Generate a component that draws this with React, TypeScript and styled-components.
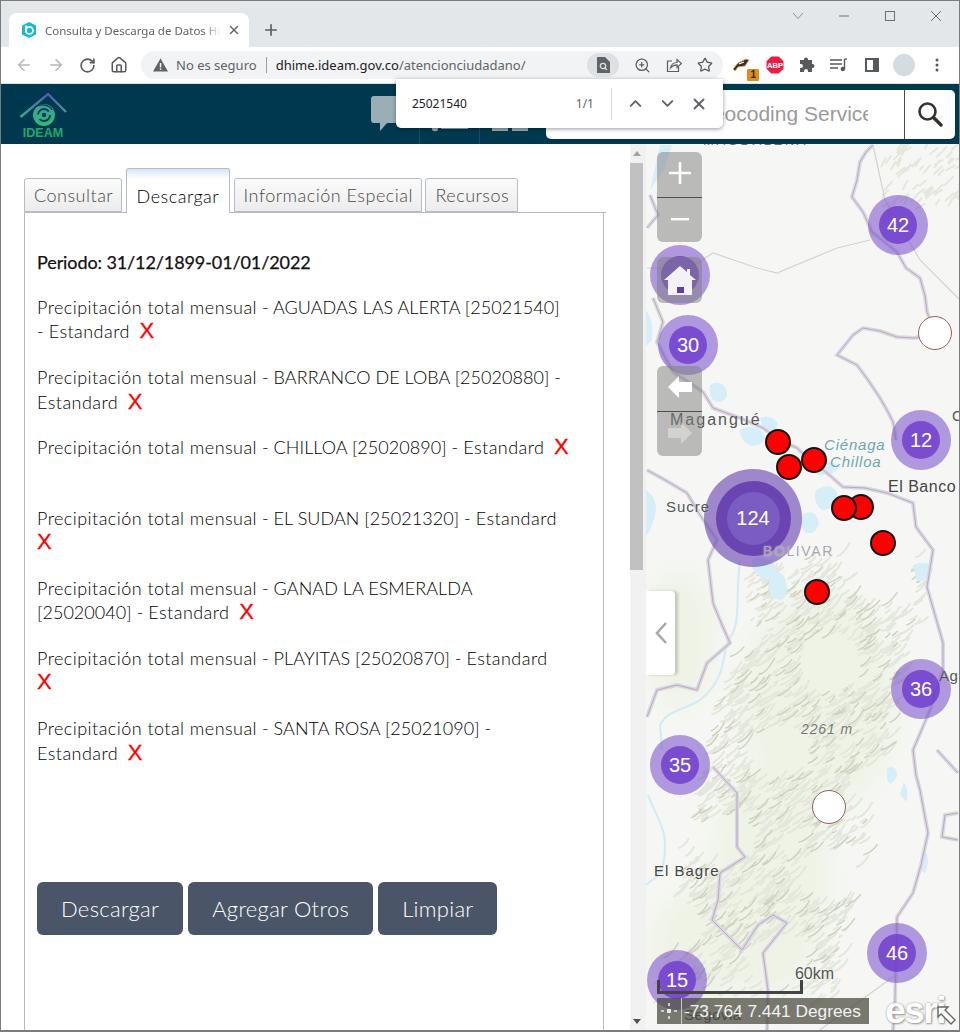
import React from "react";
import styled, { createGlobalStyle } from "styled-components";
import { ArrowLeft, ArrowRight, ChevronDown, ChevronUp, House, Plus, RotateCw, Star, X, ZoomIn } from "lucide-react";

const GlobalStyle = createGlobalStyle`
  html, body { margin: 0; padding: 0; background: #fff; }
  * { box-sizing: border-box; }
`;

const UI_FONT = `"Noto Sans", "Open Sans", sans-serif`;
const PAGE_FONT = `Lato, "Noto Sans", sans-serif`;
const MAP_FONT = `"Liberation Sans", Arial, sans-serif`;

const stations = [
  "AGUADAS LAS ALERTA [25021540] -\u00a0",
  "BARRANCO DE LOBA [25020880] - ",
  "CHILLOA [25020890] - ",
  "EL SUDAN [25021320] - ",
  "GANAD LA ESMERALDA [25020040] - ",
  "PLAYITAS [25020870] - ",
  "SANTA ROSA [25021090] - ",
];

const clusters = [
  { x: 680, y: 275, label: "" },
  { x: 898, y: 225, label: "42" },
  { x: 688, y: 345, label: "30" },
  { x: 921, y: 440, label: "12" },
  { x: 921, y: 689, label: "36" },
  { x: 680, y: 765, label: "35" },
  { x: 897, y: 953, label: "46" },
  { x: 677, y: 980, label: "15" },
];

const redPins = [
  [778, 442],
  [814, 460],
  [789, 467],
  [861, 507],
  [844, 508],
  [883, 543],
  [817, 592],
];

const labels = [
  { x: 703, y: 133, text: "MAGDALENA", tone: "#6b6b6b", size: 13, spacing: 2.6 },
  { x: 670, y: 412, text: "Magangué", tone: "#555", size: 16, spacing: 2 },
  { x: 824, y: 437, text: "Ciénaga", tone: "#6fa6ad", size: 15, spacing: 0.8, italic: true },
  { x: 830, y: 454, text: "Chilloa", tone: "#6fa6ad", size: 15, spacing: 0.8, italic: true },
  { x: 666, y: 499, text: "Sucre", tone: "#555", size: 15, spacing: 1 },
  { x: 888, y: 479, text: "El Banco", tone: "#444", size: 16, spacing: 0.5 },
  { x: 763, y: 543, text: "BOLIVAR", tone: "#a9a7ad", size: 14, spacing: 1.6 },
  { x: 801, y: 721, text: "2261 m", tone: "#777", size: 14, spacing: 0.9, italic: true },
  { x: 939, y: 668, text: "Ag", tone: "#555", size: 15, spacing: 0.5 },
  { x: 952, y: 408, text: "C", tone: "#555", size: 15, spacing: 0 },
  { x: 654, y: 863, text: "El Bagre", tone: "#444", size: 15, spacing: 1 },
  { x: 684, y: 1007, text: "Segovia", tone: "#555", size: 15, spacing: 0.5 },
];

const borders = [
  "M873 145 L866 152 L860 162 L857 180 L852 197 L863 212 L872 232 L897 252 L906 268 L920 278 L925 296 L927 312 L935 333",
  "M933 333 L915 338 L897 337 L880 331 L863 328 L853 335 L845 345 L837 355 L857 365 L868 380 L880 398 L888 412 L893 422 L896 440",
  "M650 195 L658 215 L647 228",
  "M653 298 L663 322 L657 342 L673 372 L690 383 L703 392 L713 408 L740 418 L763 428 L780 440 L797 448 L812 462 L827 473 L843 487 L865 488 L887 493 L913 503 L916 527 L933 550 L927 587 L935 615 L943 643 L943 670 L930 710 L913 750 L916 775 L920 790 L928 833 L921 865 L913 893 L897 917 L896 960 L895 1000 L893 1032",
  "M647 470 L665 480 L687 493 L700 515 L717 540 L708 560 L713 603 L722 625 L730 643 L707 663 L697 690 L677 685 L657 690 L647 717",
  "M713 767 L725 780 L737 793 L737 847 L745 857 L720 873 L718 900 L712 920 L727 935 L742 950 L758 925 L773 915 L787 923 L763 953 L768 990 L767 1032",
  "M937 750 L958 773 M958 813 L945 815 L942 837 L958 840",
];

const thinLines = [
  "M647 268 L690 268 L713 253 L757 268 L777 273 L837 248 L870 240",
  "M873 145 L885 200 L920 260 L960 300",
  "M893 977 L817 1032",
];

const lakes = [
  "M710 385 q10 -6 16 4 q4 10 -6 13 q-12 0 -10 -17z",
  "M760 418 q12 -4 18 6 q-2 10 -14 8z",
  "M740 430 q14 -8 24 4 q4 10 -12 12 q-12 -4 -12 -16z",
  "M816 490 q18 -10 22 6 q-4 14 -16 14 q-10 -8 -6 -20z",
  "M803 514 q14 -6 16 10 q-4 12 -14 8 q-8 -8 -2 -18z",
  "M752 560 q16 -6 24 6 q-4 14 -14 12 q-12 -6 -10 -18z",
  "M772 572 q10 -4 14 10 q4 14 -6 18 q-12 -2 -12 -14z",
  "M812 465 q18 -8 28 2 q-8 10 -22 8z",
  "M660 145 L672 145 L664 170 L650 190z",
  "M646 310 q8 10 6 30 l-6 6z",
  "M646 490 q10 6 10 20 q-4 20 -10 26z",
  "M913 565 q16 -6 20 4 q-4 12 -16 12z",
  "M887 768 q10 -4 10 8 q-6 12 -10 4z",
  "M904 782 q6 10 2 20 l-6 -8z",
  "M925 850 q6 10 0 24 l-6 -6z",
];

const rivers = [
  "M740 560 C735 600 742 625 728 640 C722 660 725 680 700 700 C680 712 668 710 660 725 L662 750",
  "M648 795 C660 825 668 830 664 860 C660 880 650 880 646 885",
];

// Seeded noise for the hillshade strokes, so every run draws the same relief.
const makeRelief = () => {
  let seed = 20211;
  const next = () => {
    seed = (seed * 16807) % 2147483647;
    return seed / 2147483647;
  };
  const strong: string[] = [];
  const soft: string[] = [];
  for (let i = 0; i < 1800; i++) {
    const t = next();
    const cx = 835 - t * 95 + (next() - 0.5) * 180;
    const cy = 570 + t * 420 + (next() - 0.5) * 40;
    const len = 4 + next() * 12;
    // keep the ridges in patches, with pale valleys between them
    if (Math.sin(cx * 0.05 + cy * 0.03) + Math.sin(cy * 0.06 - cx * 0.02) < -0.7) continue;
    const line = `M${cx.toFixed(1)} ${cy.toFixed(1)} q${(len * 0.5).toFixed(1)} ${(-len * 0.1).toFixed(1)} ${len.toFixed(1)} ${(-len * (0.5 + next() * 0.6)).toFixed(1)}`;
    if (i % 5 === 0) strong.push(line);
    else soft.push(line);
  }
  for (let i = 0; i < 70; i++) {
    const cx = 880 + next() * 80;
    const cy = 145 + next() * 65;
    soft.push(`M${cx.toFixed(1)} ${cy.toFixed(1)} l${(4 + next() * 6).toFixed(1)} ${(-4 - next() * 6).toFixed(1)}`);
  }
  return { strong: strong.join(" "), soft: soft.join(" ") };
};

const relief = makeRelief();

const App = () => (
  <>
    <GlobalStyle />
    <Window>
      <TabStrip>
        <BrowserTab>
          <svg width="16" height="16" viewBox="0 0 16 16">
            <polygon points="8,0 15,3.5 15,12.5 8,16 1,12.5 1,3.5" fill="#1fb5d6" />
            <circle cx="8.4" cy="8.4" r="3.6" fill="none" stroke="#fff" strokeWidth="1.7" />
            <path d="M5 3.5 V10" stroke="#fff" strokeWidth="1.7" />
          </svg>
          <TabTitle>Consulta y Descarga de Datos Hidrología</TabTitle>
          <X size={14} color="#5f6368" strokeWidth={2.4} />
        </BrowserTab>
        <NewTab>
          <Plus size={18} color="#5a5e63" strokeWidth={2.2} />
        </NewTab>
        <WindowButtons>
          <svg width="12" height="8" viewBox="0 0 12 8">
            <path d="M1 1 L6 6.5 L11 1" fill="none" stroke="#8b8f94" strokeWidth="1" />
          </svg>
          <svg width="12" height="12" viewBox="0 0 12 12">
            <path d="M1 6 H11" stroke="#6b6e72" strokeWidth="1" />
          </svg>
          <svg width="12" height="12" viewBox="0 0 12 12">
            <rect x="1.5" y="1.5" width="9" height="9" fill="none" stroke="#6b6e72" strokeWidth="1" />
          </svg>
          <svg width="12" height="12" viewBox="0 0 12 12">
            <path d="M1 1 L11 11 M11 1 L1 11" stroke="#6b6e72" strokeWidth="1" />
          </svg>
        </WindowButtons>
      </TabStrip>

      <Toolbar>
        <NavButtons>
          <ArrowLeft size={18} color="#b4b7bb" strokeWidth={2} />
          <ArrowRight size={18} color="#b4b7bb" strokeWidth={2} />
          <RotateCw size={17} color="#56595e" strokeWidth={2.3} />
          <House size={18} color="#56595e" strokeWidth={2} />
        </NavButtons>
        <Omnibox>
          <svg width="15" height="14" viewBox="0 0 15 14">
            <path d="M7.5 0.5 L15 13.5 H0 Z" fill="#5f6368" />
            <rect x="6.8" y="5" width="1.5" height="4.5" fill="#f1f3f4" />
            <rect x="6.8" y="10.4" width="1.5" height="1.5" fill="#f1f3f4" />
          </svg>
          <Insecure>No es seguro</Insecure>
          <UrlDivider />
          <Url>
            dhime.ideam.gov.co<span>/atencionciudadano/</span>
          </Url>
          <OmniActions>
            <FindChip>
              <svg width="14" height="16" viewBox="0 0 14 16">
                <path d="M1 0 H9 L14 5 V16 H1 Z" fill="#5f6368" />
                <circle cx="7" cy="9" r="2.7" fill="none" stroke="#dee1e3" strokeWidth="1.3" />
                <path d="M9 11 L11 13" stroke="#dee1e3" strokeWidth="1.3" />
              </svg>
            </FindChip>
            <ZoomIn size={17} color="#5a5e63" strokeWidth={1.8} />
            <svg width="16" height="16" viewBox="0 0 16 16">
              <path d="M6 4 H1.5 V14.5 H12.5 V10" fill="none" stroke="#5a5e63" strokeWidth="1.2" />
              <path d="M4.5 11 C5 7.5 8 5.5 11 5.5 V2.5 L15.5 6.5 L11 10.5 V7.8 C8.5 7.8 6.5 8.5 4.5 11Z" fill="none" stroke="#5a5e63" strokeWidth="1.2" />
            </svg>
            <Star size={16} color="#5a5e63" strokeWidth={2} />
          </OmniActions>
        </Omnibox>
        <Extensions>
          <ExtensionBadge>
            <svg width="18" height="14" viewBox="0 0 18 14">
              <path d="M1 11 L6 5 L14 1 L17 2 L13 8 L6 9 L3 13 Z" fill="#2d2d2d" stroke="#e5a35a" strokeWidth="1" />
              <path d="M7 6 L12 4" stroke="#fff" strokeWidth="1.2" />
            </svg>
            <Badge>1</Badge>
          </ExtensionBadge>
          <svg width="18" height="18" viewBox="0 0 18 18">
            <polygon points="5.3,0.5 12.7,0.5 17.5,5.3 17.5,12.7 12.7,17.5 5.3,17.5 0.5,12.7 0.5,5.3" fill="#ed1c45" />
            <text x="9" y="11.8" textAnchor="middle" fontFamily={MAP_FONT} fontSize="7.6" fontWeight="700" fill="#fff">
              ABP
            </text>
          </svg>
          <svg width="16" height="16" viewBox="0 0 16 16">
            <path d="M5 2.5 a2 2 0 0 1 4 0 V3 H13 V7 h0.5 a2 2 0 0 1 0 4 H13 V15 H9 v-1 a2 2 0 0 0 -4 0 v1 H1 V11 h1 a2 2 0 0 0 0 -4 H1 V3 H5 Z" fill="#56595e" />
          </svg>
          <svg width="18" height="14" viewBox="0 0 18 14">
            <path d="M0 2 H12 M0 6 H12 M0 10 H8" stroke="#56595e" strokeWidth="1.4" />
            <path d="M14.5 1 V11" stroke="#56595e" strokeWidth="1.4" />
            <path d="M14.5 1 H17" stroke="#56595e" strokeWidth="1.4" />
            <circle cx="12.8" cy="11" r="2.2" fill="#56595e" />
          </svg>
          <svg width="14" height="14" viewBox="0 0 14 14">
            <rect x="1" y="1" width="12" height="12" fill="none" stroke="#56595e" strokeWidth="2" />
            <rect x="8" y="1" width="5" height="12" fill="#56595e" />
          </svg>
          <Avatar />
          <svg width="4" height="14" viewBox="0 0 4 14">
            <circle cx="2" cy="2" r="1.5" fill="#56595e" />
            <circle cx="2" cy="7" r="1.5" fill="#56595e" />
            <circle cx="2" cy="12" r="1.5" fill="#56595e" />
          </svg>
        </Extensions>
      </Toolbar>

      <AppHeader>
        <Logo>
          <svg width="48" height="34" viewBox="0 0 48 34">
            <defs>
              <linearGradient id="roof" x1="0" y1="0" x2="0" y2="1">
                <stop offset="0" stopColor="#5a55b0" />
                <stop offset="1" stopColor="#2fb184" />
              </linearGradient>
              <linearGradient id="eye" x1="0" y1="0" x2="0" y2="1">
                <stop offset="0" stopColor="#3f9d9c" />
                <stop offset="1" stopColor="#2dbb75" />
              </linearGradient>
            </defs>
            <path d="M1.5 24 L29 1 L47 19" fill="none" stroke="url(#roof)" strokeWidth="2.4" />
            <circle cx="25" cy="22" r="11" fill="url(#eye)" />
            <path d="M16 14 C22 10 31 12 33 17" fill="none" stroke="#00394f" strokeWidth="1.4" />
            <circle cx="25" cy="22" r="6" fill="none" stroke="#00394f" strokeWidth="1.8" strokeDasharray="14 5" />
            <circle cx="25" cy="22" r="2.2" fill="#00394f" />
          </svg>
          <LogoText>IDEAM</LogoText>
        </Logo>
        <HeaderIcons>
          <svg width="34" height="36" viewBox="0 0 34 36">
            <path d="M3 0 H34 V27 H16 L9 35 V27 H3 A3 3 0 0 1 0 24 V3 A3 3 0 0 1 3 0 Z" fill="#9aaeb6" />
          </svg>
          <HeaderCell>
            <svg width="38" height="36" viewBox="0 0 38 36">
              <circle cx="5" cy="32" r="3.2" fill="#9aaeb6" />
              <rect x="11" y="27" width="27" height="6" fill="#9aaeb6" />
            </svg>
          </HeaderCell>
          <HeaderCell>
            <svg width="36" height="36" viewBox="0 0 36 36">
              <rect x="0" y="29" width="16" height="6" fill="#9aaeb6" />
              <rect x="20" y="29" width="16" height="6" fill="#9aaeb6" />
            </svg>
          </HeaderCell>
        </HeaderIcons>
        <Geocoder>
          <GeocoderInput>
            <GeocoderText>Find address or place with Geocoding Service</GeocoderText>
          </GeocoderInput>
          <GeocoderButton>
            <svg width="26" height="26" viewBox="0 0 26 26">
              <circle cx="10.5" cy="10.5" r="8" fill="none" stroke="#33342f" strokeWidth="2.6" />
              <path d="M16.5 16.5 L24 24" stroke="#33342f" strokeWidth="3.4" strokeLinecap="round" />
            </svg>
          </GeocoderButton>
        </Geocoder>
      </AppHeader>

      <FindBar>
        <FindQuery>25021540</FindQuery>
        <FindCount>1/1</FindCount>
        <FindDivider />
        <FindButtons>
          <ChevronUp size={19} color="#5f6368" strokeWidth={2.4} />
          <ChevronDown size={19} color="#5f6368" strokeWidth={2.4} />
          <X size={18} color="#5f6368" strokeWidth={2.6} />
        </FindButtons>
      </FindBar>

      <Body>
        <Panel>
          <PanelTabs>
            <PanelTab>Consultar</PanelTab>
            <PanelTab $active>Descargar</PanelTab>
            <PanelTab>Información Especial</PanelTab>
            <PanelTab>Recursos</PanelTab>
          </PanelTabs>
          <TabContent>
            <Period>Periodo: 31/12/1899-01/01/2022</Period>
            <StationList>
              {stations.map((station) => (
                <Station key={station}>
                  <Wide>Precipitación total mensual</Wide> - {station}
                  <Wide>Estandard</Wide>
                  <RemoveMark> X</RemoveMark>
                </Station>
              ))}
            </StationList>
            <Actions>
              <ActionButton>Descargar</ActionButton>
              <ActionButton>Agregar Otros</ActionButton>
              <ActionButton>Limpiar</ActionButton>
            </Actions>
          </TabContent>
        </Panel>

        <Scrollbar>
          <ScrollArrow $up />
          <ScrollThumb />
          <ScrollArrow />
        </Scrollbar>

        <MapArea>
          <MapCanvas viewBox="646 144 314 888" preserveAspectRatio="none">
            <defs>
              <filter id="soft" x="-5%" y="-5%" width="110%" height="110%">
                <feGaussianBlur stdDeviation="0.7" />
              </filter>
              <filter id="softer" x="-10%" y="-10%" width="120%" height="120%">
                <feGaussianBlur stdDeviation="12" />
              </filter>
            </defs>
            <rect x="646" y="144" width="314" height="888" fill="#f6f7f4" />
            <g filter="url(#softer)" fill="#eef3e6">
              <ellipse cx="770" cy="880" rx="60" ry="120" />
              <ellipse cx="820" cy="700" rx="80" ry="110" />
              <ellipse cx="680" cy="640" rx="35" ry="70" />
              <ellipse cx="700" cy="950" rx="50" ry="60" />
            </g>
            <g filter="url(#soft)">
              <path d={relief.soft} fill="none" stroke="#e4e7db" strokeWidth="2" />
              <path d={relief.strong} fill="none" stroke="#cdd1bd" strokeWidth="1.4" />
              <g fill="#d6eef8">
                {lakes.map((d) => (
                  <path key={d} d={d} />
                ))}
              </g>
              <g fill="none" stroke="#d2ecf6" strokeWidth="2.2">
                {rivers.map((d) => (
                  <path key={d} d={d} />
                ))}
              </g>
              <g fill="none" stroke="#d5d2d4" strokeWidth="1.2">
                {thinLines.map((d) => (
                  <path key={d} d={d} />
                ))}
              </g>
              <g fill="none" stroke="#ddd6e3" strokeWidth="4">
                {borders.map((d) => (
                  <path key={d} d={d} />
                ))}
              </g>
              <g fill="none" stroke="#9a94a2" strokeOpacity="0.7" strokeWidth="0.9">
                {borders.map((d) => (
                  <path key={d} d={d} />
                ))}
              </g>
            </g>
          </MapCanvas>

          {clusters.map((cluster) => (
            <Cluster key={`${cluster.x}-${cluster.y}`} $x={cluster.x} $y={cluster.y}>
              <ClusterCore>{cluster.label}</ClusterCore>
            </Cluster>
          ))}
          <BigCluster>
            <BigClusterMid>
              <BigClusterCore>124</BigClusterCore>
            </BigClusterMid>
          </BigCluster>

          {labels.map((label) => (
            <MapLabel
              key={label.text}
              $x={label.x}
              $y={label.y}
              $tone={label.tone}
              $size={label.size}
              $spacing={label.spacing}
              $italic={label.italic}
            >
              {label.text}
            </MapLabel>
          ))}

          {redPins.map(([x, y]) => (
            <RedPin key={`${x}-${y}`} $x={x} $y={y} />
          ))}
          <WhitePin $x={935} $y={333} />
          <WhitePin $x={829} $y={807} />

          <ZoomControl>
            <ControlCell>
              <svg width="24" height="24" viewBox="0 0 24 24">
                <path d="M12 1 V23 M1 12 H23" stroke="#fff" strokeWidth="2.6" />
              </svg>
            </ControlCell>
            <ControlCell $divided>
              <svg width="18" height="4" viewBox="0 0 18 4">
                <rect width="18" height="2.4" y="1" fill="#fff" />
              </svg>
            </ControlCell>
          </ZoomControl>
          <HomeControl>
            <svg width="32" height="30" viewBox="0 0 32 30">
              <path d="M16 1 L23 7 V4 H26 V10 L32 15 L28 15 V30 H4 V15 H0 Z" fill="#f4f2f6" />
              <rect x="13" y="22" width="7" height="6" fill="#5c3ea5" />
            </svg>
          </HomeControl>
          <ExtentControl>
            <ControlCell>
              <svg width="24" height="22" viewBox="0 0 24 22">
                <path d="M0 11 L11 0 V6 H24 V16 H11 V22 Z" fill="#fff" />
              </svg>
            </ControlCell>
            <ControlCell $divided $dim>
              <svg width="24" height="22" viewBox="0 0 24 22">
                <path d="M24 11 L13 0 V6 H0 V16 H13 V22 Z" fill="#fff" />
              </svg>
            </ControlCell>
          </ExtentControl>

          <CollapseTab>
            <svg width="14" height="24" viewBox="0 0 14 24">
              <path d="M12 2 L3 12 L12 22" fill="none" stroke="#a8a8a8" strokeWidth="2.6" />
            </svg>
          </CollapseTab>

          <ScaleBar>
            <ScaleText>60km</ScaleText>
          </ScaleBar>
          <CoordBar>
            <CoordIcon>
              <svg width="16" height="16" viewBox="0 0 16 16">
                <path d="M8 0 V3 M8 13 V16 M0 8 H3 M13 8 H16" stroke="#e8e8e8" strokeWidth="1.6" />
                <rect x="6" y="6" width="4" height="4" fill="#e8e8e8" />
              </svg>
            </CoordIcon>
            <CoordText>-73.764 7.441 Degrees</CoordText>
          </CoordBar>
          <EsriMark>esri</EsriMark>
          <ResizeIcon width="20" height="20" viewBox="0 0 20 20">
            <path d="M1 1 H11 L8 4 L18 14 L14 18 L4 8 L1 11 Z" fill="#fff" stroke="#666" strokeWidth="1.4" />
          </ResizeIcon>
        </MapArea>
      </Body>
    </Window>
  </>
);

export default App;

const Window = styled.div`
  position: relative;
  display: flex;
  flex-direction: column;
  width: 960px;
  height: 1032px;
  overflow: hidden;
  border: 1px solid #7c7c7c;
  border-bottom-width: 2px;
  font-family: ${UI_FONT};
`;

const TabStrip = styled.div`
  display: flex;
  align-items: flex-end;
  flex: 0 0 46px;
  padding-left: 8px;
  background: #e4e7ea;
`;

const BrowserTab = styled.div`
  display: flex;
  align-items: center;
  width: 240px;
  height: 34px;
  padding: 0 8px 0 12px;
  background: #fff;
  border-radius: 8px 8px 0 0;
`;

const TabTitle = styled.span`
  flex: 1;
  margin-left: 8px;
  margin-right: 6px;
  overflow: hidden;
  white-space: nowrap;
  font-size: 11.5px;
  color: #5f6368;
  -webkit-mask-image: linear-gradient(90deg, #000 90%, transparent);
  mask-image: linear-gradient(90deg, #000 90%, transparent);
`;

const NewTab = styled.div`
  display: flex;
  align-items: center;
  height: 34px;
  margin-left: 13px;
`;

const WindowButtons = styled.div`
  display: flex;
  align-items: center;
  gap: 34px;
  margin-left: auto;
  height: 100%;
  padding: 0 17px 16px 0;
`;

const Toolbar = styled.div`
  display: flex;
  align-items: center;
  flex: 0 0 37px;
  padding-left: 14px;
  background: #fff;
  border-bottom: 1px solid #dfe1e5;
`;

const NavButtons = styled.div`
  display: flex;
  align-items: center;
  gap: 14px;
  width: 126px;
`;

const Omnibox = styled.div`
  display: flex;
  align-items: center;
  width: 582px;
  height: 28px;
  padding: 0 10px 0 12px;
  background: #f1f3f4;
  border-radius: 14px;
  font-size: 13px;
`;

const Insecure = styled.span`
  margin-left: 8px;
  color: #5f6368;
`;

const UrlDivider = styled.span`
  width: 1px;
  height: 16px;
  margin: 0 9px;
  background: #9aa0a6;
`;

const Url = styled.span`
  color: #202124;

  span {
    color: #5f6368;
  }
`;

const OmniActions = styled.div`
  display: flex;
  align-items: center;
  gap: 15px;
  margin-left: auto;
`;

const FindChip = styled.div`
  display: flex;
  align-items: center;
  justify-content: center;
  width: 32px;
  height: 24px;
  background: #dee1e3;
  border-radius: 12px;
`;

const Extensions = styled.div`
  display: grid;
  grid-template-columns: repeat(7, 32.4px);
  align-items: center;
  justify-items: center;
  padding-left: 3px;
`;

const ExtensionBadge = styled.div`
  position: relative;
  display: flex;
  width: 20px;
`;

const Badge = styled.span`
  position: absolute;
  right: -7px;
  bottom: -9px;
  width: 12px;
  height: 12px;
  background: #e58a20;
  border-radius: 1px;
  text-align: center;
  font: 700 10px/12px ${MAP_FONT};
  color: #1b2b12;
`;

const Avatar = styled.div`
  width: 22px;
  height: 22px;
  background: #d3dce0;
  border-radius: 50%;
`;

const AppHeader = styled.header`
  display: flex;
  align-items: center;
  flex: 0 0 60px;
  padding-left: 18px;
  padding-right: 4px;
  background: #00394f;
`;

const Logo = styled.div`
  display: flex;
  flex-direction: column;
  align-items: center;
  width: 48px;
  margin-top: 4px;
`;

const LogoText = styled.span`
  margin-top: -1px;
  font: 700 12.5px/14px ${MAP_FONT};
  color: #22a86a;
`;

const HeaderIcons = styled.div`
  display: flex;
  align-items: stretch;
  height: 60px;
  margin-left: 304px;
  padding-top: 12px;
`;

const HeaderCell = styled.div`
  display: flex;
  align-items: flex-start;
  justify-content: flex-end;
  width: 60px;
  margin-top: -12px;
  padding: 12px 11px 0 0;
  border-left: 1px solid #1c4d60;

  &:first-of-type {
    margin-left: 14px;
  }
`;

const Geocoder = styled.div`
  display: flex;
  width: 409px;
  height: 49px;
  margin-left: auto;
  background: #fff;
  border-radius: 5px;
  overflow: hidden;
`;

const GeocoderInput = styled.div`
  width: 359px;
  padding-right: 36px;
  border-right: 1px solid #4a4a4a;
`;

const GeocoderText = styled.div`
  overflow: hidden;
  white-space: nowrap;
  direction: rtl;
  text-indent: -6px;
  font: 21px/47px ${MAP_FONT};
  color: #9a9a9a;
`;

const GeocoderButton = styled.div`
  display: flex;
  align-items: center;
  justify-content: center;
  flex: 1;
`;

const FindBar = styled.div`
  position: absolute;
  top: 78px;
  left: 395px;
  display: flex;
  align-items: center;
  width: 327px;
  height: 49px;
  padding-left: 16px;
  background: #fff;
  border-radius: 0 0 5px 5px;
  box-shadow: 0 1px 4px rgba(0, 0, 0, 0.4);
`;

const FindQuery = styled.span`
  flex: 1;
  font-size: 12px;
  color: #202124;
`;

const FindCount = styled.span`
  font-size: 12px;
  color: #5f6368;
`;

const FindDivider = styled.span`
  width: 1px;
  height: 32px;
  margin: 0 14px 0 17px;
  background: #dadce0;
`;

const FindButtons = styled.div`
  display: flex;
  align-items: center;
  gap: 13px;
  padding-right: 15px;
`;

const Body = styled.main`
  display: flex;
  flex: 1;
  min-height: 0;
`;

const Panel = styled.section`
  display: flex;
  flex-direction: column;
  flex: 0 0 629px;
  padding: 24px 26px 0 23px;
  background: #fff;
  font-family: ${PAGE_FONT};
`;

const PanelTabs = styled.div`
  display: flex;
  align-items: flex-end;
  gap: 3.4px;
  height: 45px;
  margin-right: -2px;
  border-bottom: 1px solid #b5bcc7;
`;

const PanelTab = styled.div<{ $active?: boolean }>`
  height: ${(p) => (p.$active ? "45px" : "34px")};
  margin-bottom: ${(p) => (p.$active ? "-1px" : "0")};
  padding: ${(p) => (p.$active ? "15px 10px 0 10px" : "4px 8px 0 9px")};
  border: 1px solid #b5bcc7;
  border-bottom: ${(p) => (p.$active ? "none" : "1px solid #b5bcc7")};
  border-radius: 3px 3px 0 0;
  background: ${(p) =>
    p.$active
      ? "linear-gradient(180deg, #d6e6f7 0, #fff 10px)"
      : "linear-gradient(180deg, #fbfbfb 0, #ececec 100%)"};
  font-size: 18px;
  font-weight: 300;
  letter-spacing: 0.5px;
  line-height: 24px;
  color: ${(p) => (p.$active ? "#000" : "#4a4a4a")};
`;

const TabContent = styled.div`
  flex: 1;
  padding: 37px 12px 0 12px;
  border: 1px solid #b5bcc7;
  border-top: none;
  border-bottom: none;
`;

const Period = styled.p`
  margin: 0 0 21px;
  font-size: 18px;
  line-height: 24px;
  letter-spacing: -0.1px;
  -webkit-text-stroke: 0.25px #111;
  color: #111;
`;

const StationList = styled.div`
  display: flex;
  flex-direction: column;
  width: 534px;
`;

const Station = styled.p`
  min-height: 49px;
  margin: 0 0 21.2px;
  font-size: 18px;
  font-weight: 300;
  letter-spacing: 0.05px;
  line-height: 24.4px;
  color: #000;
`;

const Wide = styled.span`
  letter-spacing: 0.45px;
`;

const RemoveMark = styled.span`
  font: 22px/20px ${MAP_FONT};
  word-spacing: 3.5px;
  -webkit-text-stroke: 0.3px #f00;
  color: #f00;
`;

const Actions = styled.div`
  display: flex;
  gap: 5px;
  margin-top: 96px;
`;

const ActionButton = styled.div`
  height: 53px;
  padding: 0 24px;
  background: #4a5568;
  border-radius: 6px;
  font-size: 22px;
  font-weight: 300;
  letter-spacing: 0.3px;
  line-height: 53px;
  color: #fff;
`;

const Scrollbar = styled.div`
  display: flex;
  flex-direction: column;
  flex: 0 0 16px;
  background: #f1f1f1;
`;

const ScrollArrow = styled.div<{ $up?: boolean }>`
  flex: 0 0 19px;
  position: relative;

  &::after {
    content: "";
    position: absolute;
    left: 3px;
    top: ${(p) => (p.$up ? "7px" : "8px")};
    border-left: 4px solid transparent;
    border-right: 4px solid transparent;
    border-${(p) => (p.$up ? "bottom" : "top")}: 5px solid ${(p) => (p.$up ? "#a3a3a3" : "#505050")};
  }
`;

const ScrollThumb = styled.div`
  flex: 0 0 407px;
  width: 13px;
  margin-bottom: auto;
  background: #c1c1c1;
`;

const MapArea = styled.div`
  position: relative;
  flex: 1;
  overflow: hidden;
`;

const MapCanvas = styled.svg`
  display: block;
  width: 314px;
  height: 888px;
`;

// Map items take page coordinates; the map itself starts at 646,144 on the page.
const onMap = (x: number, y: number, r: number) => `
  left: ${x - 646 - r}px;
  top: ${y - 144 - r}px;
  width: ${r * 2}px;
  height: ${r * 2}px;
`;

const MapLabel = styled.span<{ $x: number; $y: number; $tone: string; $size: number; $spacing: number; $italic?: boolean }>`
  position: absolute;
  left: ${(p) => p.$x - 646}px;
  top: ${(p) => p.$y - 144}px;
  font: ${(p) => (p.$italic ? "italic " : "")}${(p) => p.$size}px/16px ${MAP_FONT};
  letter-spacing: ${(p) => p.$spacing}px;
  color: ${(p) => p.$tone};
  white-space: nowrap;
  text-shadow: 0 0 2px rgba(255, 255, 255, 0.6);
`;

const Cluster = styled.div<{ $x: number; $y: number }>`
  position: absolute;
  ${(p) => onMap(p.$x, p.$y, 30)}
  display: flex;
  align-items: center;
  justify-content: center;
  background: rgba(124, 82, 205, 0.58);
  border-radius: 50%;
`;

const ClusterCore = styled.div`
  width: 38px;
  height: 38px;
  background: rgba(110, 60, 205, 0.82);
  border-radius: 50%;
  text-align: center;
  font: 20px/38px ${MAP_FONT};
  color: #fff;
`;

const BigCluster = styled.div`
  position: absolute;
  ${onMap(753, 518, 49)}
  display: flex;
  align-items: center;
  justify-content: center;
  background: rgba(112, 78, 180, 0.66);
  border-radius: 50%;
`;

const BigClusterMid = styled.div`
  display: flex;
  align-items: center;
  justify-content: center;
  width: 75px;
  height: 75px;
  background: #6a45b2;
  border-radius: 50%;
`;

const BigClusterCore = styled.div`
  width: 53px;
  height: 53px;
  background: #7a5cc2;
  border-radius: 50%;
  text-align: center;
  font: 20px/53px ${MAP_FONT};
  color: #fff;
`;

const RedPin = styled.div<{ $x: number; $y: number }>`
  position: absolute;
  ${(p) => onMap(p.$x, p.$y, 13)}
  background: #f00;
  border: 2px solid #111;
  border-radius: 50%;
`;

const WhitePin = styled.div<{ $x: number; $y: number }>`
  position: absolute;
  ${(p) => onMap(p.$x, p.$y, 17)}
  background: #fff;
  border: 1.5px solid #9c5c5c;
  border-radius: 50%;
`;

const ControlStack = styled.div`
  position: absolute;
  left: 11px;
  display: flex;
  flex-direction: column;
  width: 45px;
  background: rgba(125, 125, 125, 0.5);
  border-radius: 6px;
`;

const ZoomControl = styled(ControlStack)`
  top: 8px;
`;

const ExtentControl = styled(ControlStack)`
  top: 222px;
`;

const ControlCell = styled.div<{ $divided?: boolean; $dim?: boolean }>`
  display: flex;
  align-items: center;
  justify-content: center;
  height: 45px;
  padding-bottom: 3px;
  border-top: ${(p) => (p.$divided ? "1px solid #4f4f4f" : "none")};

  svg {
    opacity: ${(p) => (p.$dim ? 0.35 : 1)};
  }
`;

const HomeControl = styled(ControlStack)`
  top: 113px;
  height: 46px;
  align-items: center;
  justify-content: flex-end;
  padding-bottom: 8px;
`;

const CollapseTab = styled.div`
  position: absolute;
  left: 0;
  top: 447px;
  display: flex;
  align-items: center;
  justify-content: center;
  width: 29px;
  height: 84px;
  background: #fff;
  border-radius: 0 4px 4px 0;
  box-shadow: 3px 0 3px rgba(0, 0, 0, 0.18);
`;

const ScaleBar = styled.div`
  position: absolute;
  left: 11px;
  top: 836px;
  width: 146px;
  height: 14px;
  border: 3px solid #444;
  border-top: none;
`;

const ScaleText = styled.span`
  position: absolute;
  right: -34px;
  top: -15px;
  font: 16px/18px ${MAP_FONT};
  color: #555;
  text-shadow: 0 0 2px #fff;
`;

const CoordBar = styled.div`
  position: absolute;
  left: 11px;
  top: 854px;
  display: flex;
  align-items: center;
  width: 212px;
  height: 26px;
  background: rgba(70, 70, 60, 0.72);
`;

const CoordIcon = styled.div`
  display: flex;
  align-items: center;
  justify-content: center;
  width: 25px;
  height: 100%;
  border-right: 1px solid #c8c8c8;
`;

const CoordText = styled.span`
  margin-left: 2px;
  font: 17.3px/26px ${MAP_FONT};
  color: #f2f2f2;
  white-space: nowrap;
`;

const EsriMark = styled.span`
  position: absolute;
  right: 14px;
  top: 850px;
  font: 700 37px/34px ${MAP_FONT};
  letter-spacing: -1.5px;
  color: #fff;
  text-shadow: 0 0 2px #9a9a9a, 1px 1px 2px #9a9a9a;
`;

const ResizeIcon = styled.svg`
  position: absolute;
  right: 2px;
  bottom: 4px;
`;
